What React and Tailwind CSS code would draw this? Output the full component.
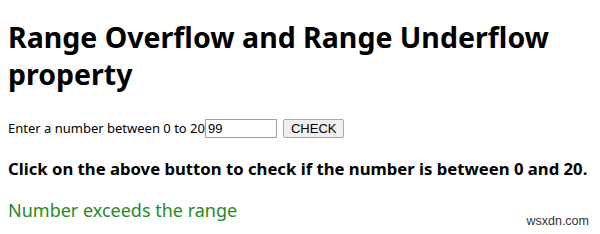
export default function App() {
  return (
    <div className="relative w-[600px] h-[234px] bg-white text-black px-2 font-['Noto_Sans',sans-serif] overflow-hidden">
      <h1 className="pt-[19px] text-[28.5px] leading-[37px] font-bold">
        Range Overflow and Range Underflow property
      </h1>

      <div className="mt-[26px] flex items-center text-[13px] leading-[19px]">
        <span>Enter a number between 0 to 20</span>
        <input
          type="text"
          defaultValue="99"
          className="w-[72px] h-[19px] border border-[#a0a0a0] px-[2px] text-[13px] font-['Liberation_Sans',sans-serif] outline-none"
        />
        <button
          type="button"
          className="ml-[6px] h-[19px] px-[7px] border border-[#a9a9a9] bg-[#f0f0f0] rounded-[2px] text-[13px] leading-[17px] font-['Liberation_Sans',sans-serif]"
        >
          CHECK
        </button>
      </div>

      <h3 className="mt-[19px] text-[16.7px] leading-[23px] font-bold whitespace-nowrap">
        Click on the above button to check if the number is between 0 and 20.
      </h3>

      <h2 className="mt-[18px] text-[18px] leading-[24px] text-[#248a24]">
        Number exceeds the range
      </h2>

      <span className="absolute right-[11px] bottom-[3px] text-[12.5px] text-[#333] font-['Liberation_Sans',sans-serif]">
        wsxdn.com
      </span>
    </div>
  );
}
